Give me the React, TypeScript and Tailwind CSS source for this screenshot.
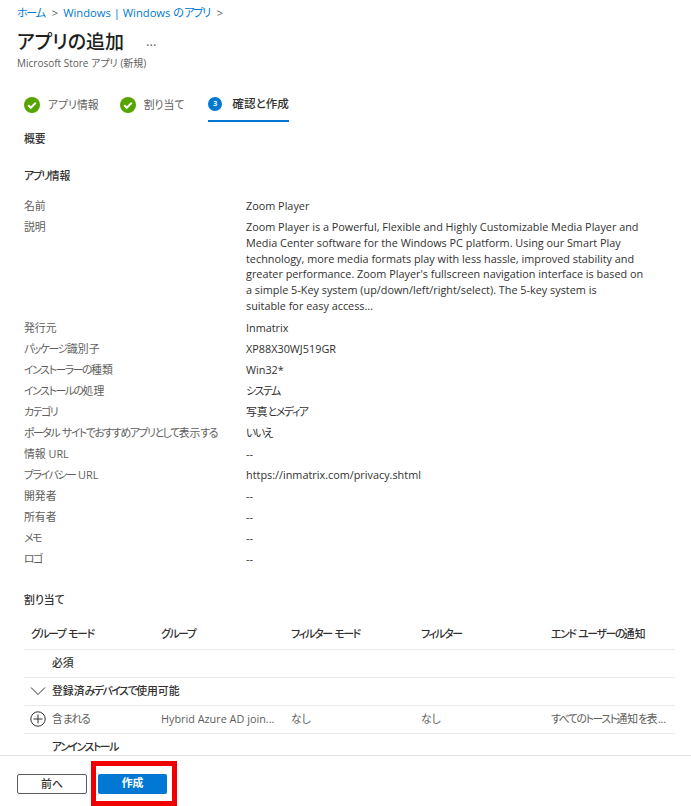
const font = { fontFamily: '"Open Sans", "Noto Sans CJK JP", sans-serif' };

// kana runs sit tighter than kanji in the reference
function Jp({ children }: { children: string }) {
  return (
    <>
      {children.split(/([ぁ-んァ-ヶー]+)/).map((part, i) =>
        i % 2 ? (
          <span key={i} className="tracking-[-1.4px]">
            {part}
          </span>
        ) : (
          part
        ),
      )}
    </>
  );
}

const rows: [string, React.ReactNode][] = [
  ["名前", "Zoom Player"],
  [
    "説明",
    <div className="leading-[15.8px] pt-[3px] pb-[3px]">
      Zoom Player is a Powerful, Flexible and Highly Customizable Media Player and
      <br />
      Media Center software for the Windows PC platform. Using our Smart Play
      <br />
      technology, more media formats play with less hassle, improved stability and
      <br />
      greater performance. Zoom Player's fullscreen navigation interface is based on
      <br />
      a simple 5-Key system (up/down/left/right/select). The 5-key system is
      <br />
      suitable for easy access...
    </div>,
  ],
  ["発行元", "Inmatrix"],
  ["パッケージ識別子", "XP88X30WJ519GR"],
  ["インストーラーの種類", "Win32*"],
  ["インストールの処理", <Jp>システム</Jp>],
  ["カテゴリ", <Jp>写真とメディア</Jp>],
  ["ポータル サイトでおすすめアプリとして表示する", <Jp>いいえ</Jp>],
  ["情報 URL", "--"],
  ["プライバシー URL", "https://inmatrix.com/privacy.shtml"],
  ["開発者", "--"],
  ["所有者", "--"],
  ["メモ", "--"],
  ["ロゴ", "--"],
];

function CheckStep({ label }: { label: string }) {
  return (
    <div className="flex items-center gap-[8px] h-[32px] pb-[2px]">
      <svg width="16" height="16" viewBox="0 0 16 16">
        <circle cx="8" cy="8" r="8" fill="#57A300" />
        <path d="M4.2 8.2l2.6 2.6 5-5" fill="none" stroke="#fff" strokeWidth="2" />
      </svg>
      <span className="text-[#605e5c]">{label}</span>
    </div>
  );
}

function TableRow({ icon, name, group, mode, filter, notice }: { icon?: React.ReactNode; name: string; group?: string; mode?: string; filter?: string; notice?: string }) {
  return (
    <div className="grid grid-cols-[130px_130px_130px_130px_1fr] items-center h-[28px] border-b border-[#edebe9] text-[#605e5c]">
      <div className="flex items-center pl-[6px]">
        <span className="w-[16px] mr-[6px] flex justify-center shrink-0">{icon}</span>
        <span className={group ? "text-[#605e5c]" : "text-[#323130] font-medium whitespace-nowrap"}>
          <Jp>{name}</Jp>
        </span>
      </div>
      <div className="pl-[7px] whitespace-nowrap">{group}</div>
      <div className="pl-[7px]">{mode}</div>
      <div className="pl-[7px]">{filter}</div>
      <div className="pl-[7px] whitespace-nowrap">{notice && <Jp>{notice}</Jp>}</div>
    </div>
  );
}

export default function App() {
  return (
    <div className="w-[691px] h-[806px] flex flex-col bg-white text-[10.85px] text-[#323130] overflow-hidden [font-feature-settings:'palt']" style={font}>
      <div className="flex-1 min-h-0 overflow-hidden">
        {/* Breadcrumb */}
        <div className="flex items-center h-[14px] mt-[6px] pl-[17px] text-[11.2px] text-[#0078d4]">
          <span>
            <Jp>ホーム</Jp>
          </span>
          <span className="ml-[7px] mr-[5px] text-[#605e5c]">&gt;</span>
          <span>
            Windows | Windows の<Jp>アプリ</Jp>
          </span>
          <span className="ml-[7px] text-[#605e5c]">&gt;</span>
        </div>

        {/* Title */}
        <div className="flex items-center pl-[17px] mt-[8px] h-[28px]">
          <h1 className="text-[19px] font-medium text-[#201f1e]">アプリの追加</h1>
          <span className="ml-[22px] text-[#605e5c] text-[13px]">...</span>
        </div>
        <div className="pl-[17px] text-[10px] text-[#605e5c] h-[14px] leading-[14px]">Microsoft Store アプリ (新規)</div>

        {/* Steps */}
        <div className="flex pl-[24px] mt-[20px] gap-[21px]">
          <CheckStep label="アプリ情報" />
          <CheckStep label="割り当て" />
          <div className="flex items-center gap-[10px] h-[32px] pb-[2px] border-b-2 border-[#0078d4] ml-[3px] text-[11.6px]">
            <span className="w-[14px] h-[14px] rounded-full bg-[#0078d4] text-white text-[7px] font-bold flex items-center justify-center">3</span>
            <span className="font-medium">確認と作成</span>
          </div>
        </div>

        <section className="pl-[24px] pr-[16px]">
          <h2 className="mt-[8px] h-[18px] leading-[18px] font-medium">概要</h2>
          <h2 className="mt-[19px] h-[18px] leading-[18px] font-medium">
            <Jp>アプリ</Jp>情報
          </h2>

          {/* App info */}
          <div className="mt-[10px]">
            {rows.map(([label, value]) => (
              <div key={label} className="grid grid-cols-[222px_1fr] leading-[21px]">
                <div className="text-[#605e5c] whitespace-nowrap">
                  <Jp>{label}</Jp>
                </div>
                <div className="text-[#323130]">{value}</div>
              </div>
            ))}
          </div>

          <h2 className="mt-[22px] h-[18px] leading-[18px] font-medium">割り当て</h2>

          {/* Assignments */}
          <div className="mt-[13px] grid grid-cols-[130px_130px_130px_130px_1fr] items-center h-[28px] pb-[3px] border-b border-[#edebe9] font-medium">
            <div className="pl-[7px]">
              <Jp>グループ モード</Jp>
            </div>
            <div className="pl-[7px]">
              <Jp>グループ</Jp>
            </div>
            <div className="pl-[7px]">
              <Jp>フィルター モード</Jp>
            </div>
            <div className="pl-[7px]">
              <Jp>フィルター</Jp>
            </div>
            <div className="pl-[7px]">
              <Jp>エンド ユーザーの通知</Jp>
            </div>
          </div>
          <TableRow name="必須" />
          <TableRow
            name="登録済みデバイスで使用可能"
            icon={
              <svg width="16" height="10" viewBox="0 0 16 10">
                <path d="M1 1.5l7 7 7-7" fill="none" stroke="#323130" strokeWidth="1" />
              </svg>
            }
          />
          <TableRow
            name="含まれる"
            group="Hybrid Azure AD join..."
            mode="なし"
            filter="なし"
            notice="すべてのトースト通知を表..."
            icon={
              <svg width="16" height="16" viewBox="0 0 16 16">
                <circle cx="8" cy="8" r="7.2" fill="none" stroke="#323130" strokeWidth="1" />
                <path d="M8 3.5v9M3.5 8h9" stroke="#323130" strokeWidth="1" />
              </svg>
            }
          />
          <TableRow name="アンインストール" />
        </section>
      </div>

      {/* Footer */}
      <footer className="h-[51px] shrink-0 border-t border-[#e1dfdd] bg-white flex items-start pl-[17px]">
        <button className="mt-[18px] w-[70px] h-[20px] border border-[#605e5c] rounded-[2px] font-medium">前へ</button>
        <div className="ml-[4px] mt-[5px] border-[5px] border-[#f00000] w-[86px] h-[45px] flex items-center pl-[2px]">
          <button className="w-[69px] h-[20px] bg-[#0078d4] text-white rounded-[2px] font-semibold">作成</button>
        </div>
      </footer>
    </div>
  );
}
